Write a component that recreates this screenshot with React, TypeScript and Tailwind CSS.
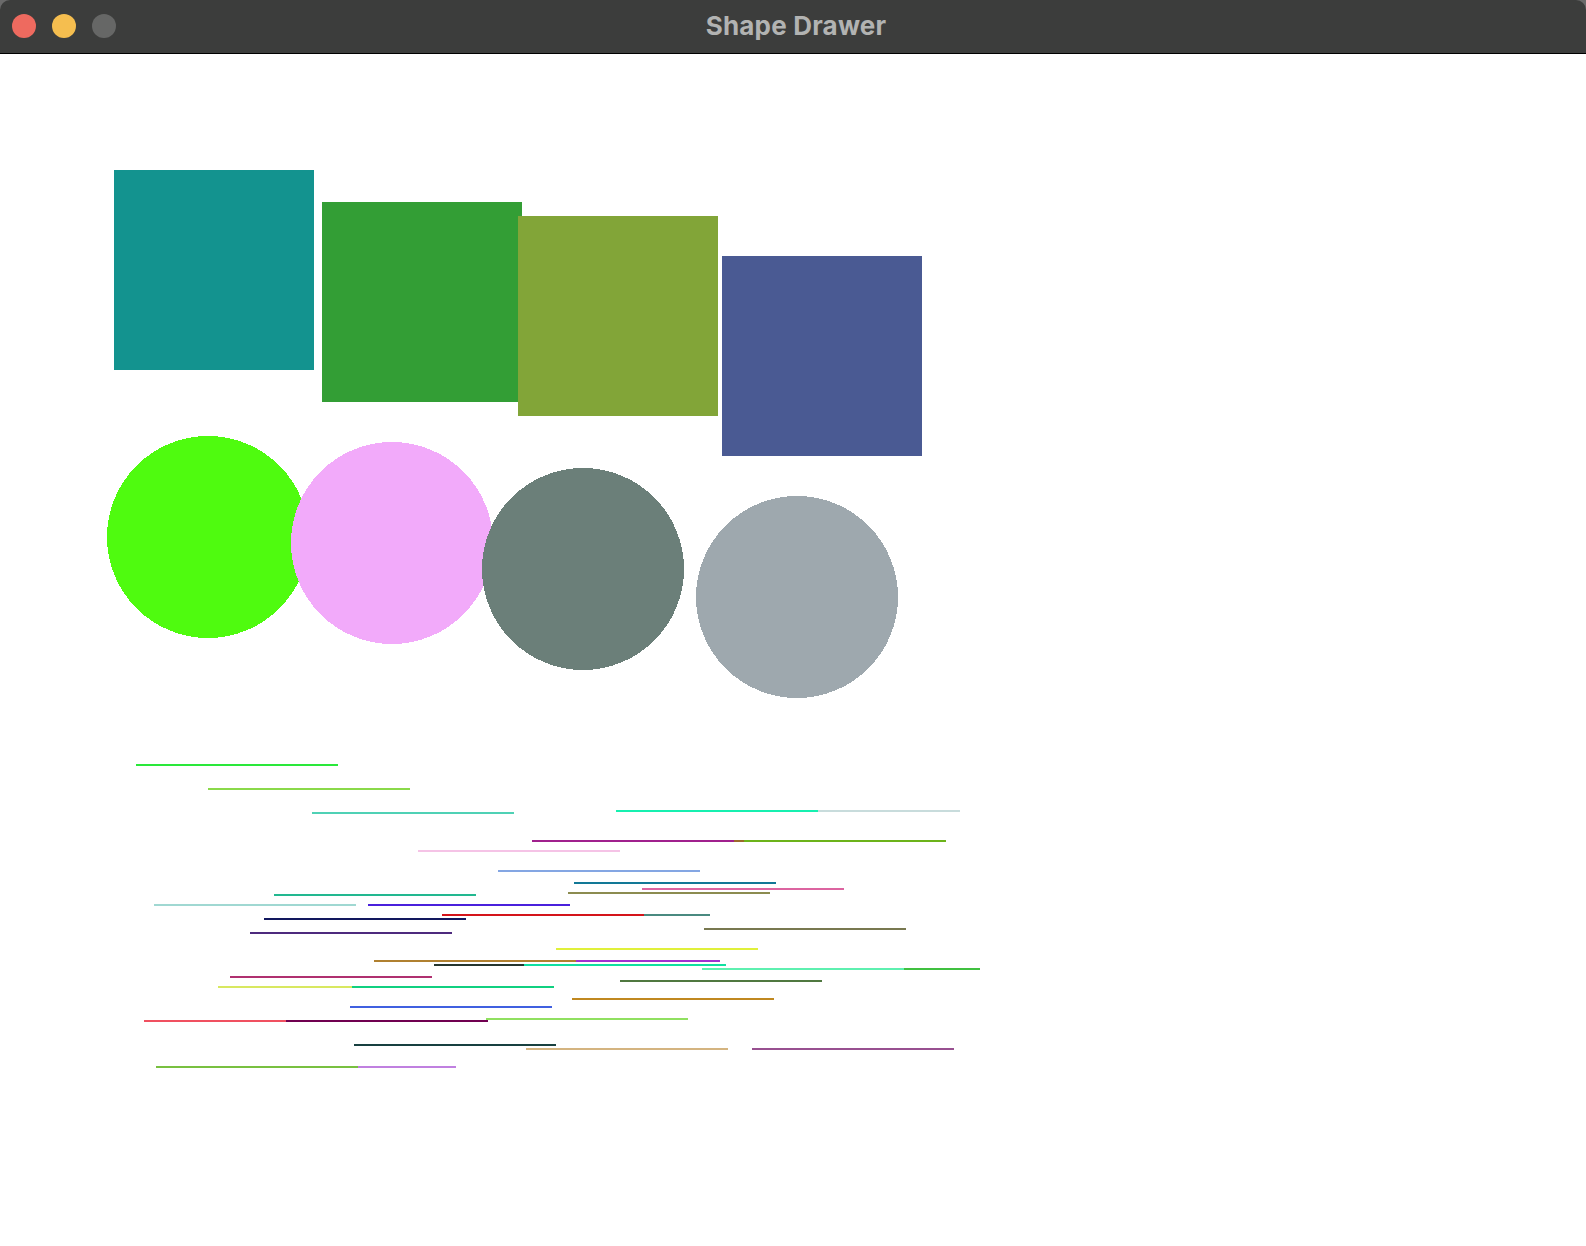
type Box = { x: number; y: number; size: number; color: string };
type Seg = { x: number; y: number; w: number; color: string };

const squares: Box[] = [
  { x: 114, y: 170, size: 200, color: "#13938f" },
  { x: 322, y: 202, size: 200, color: "#339e35" },
  { x: 518, y: 216, size: 200, color: "#82a538" },
  { x: 722, y: 256, size: 200, color: "#4a5a93" },
];

// x, y = top-left of bounding box
const circles: Box[] = [
  { x: 107, y: 436, size: 202, color: "#4ffb0f" },
  { x: 291, y: 442, size: 202, color: "#f2aafa" },
  { x: 482, y: 468, size: 202, color: "#6b7f79" },
  { x: 696, y: 496, size: 202, color: "#9ea8ae" },
];

// drawn in order, later ones on top
const lines: Seg[] = [
  { x: 136, y: 764, w: 202, color: "#2ae83a" },
  { x: 208, y: 788, w: 202, color: "#8ad94a" },
  { x: 312, y: 812, w: 202, color: "#4fd1b5" },
  { x: 758, y: 810, w: 202, color: "#c8dcdc" },
  { x: 616, y: 810, w: 202, color: "#16f0b0" },
  { x: 542, y: 840, w: 202, color: "#9b6a2a" },
  { x: 532, y: 840, w: 202, color: "#a0208d" },
  { x: 744, y: 840, w: 202, color: "#6cb31a" },
  { x: 418, y: 850, w: 202, color: "#f5c3e6" },
  { x: 498, y: 870, w: 202, color: "#84a6e3" },
  { x: 574, y: 882, w: 202, color: "#127896" },
  { x: 642, y: 888, w: 202, color: "#dc64a0" },
  { x: 568, y: 892, w: 202, color: "#8c8c50" },
  { x: 274, y: 894, w: 202, color: "#22b890" },
  { x: 154, y: 904, w: 202, color: "#a0d8d2" },
  { x: 368, y: 904, w: 202, color: "#4a20dc" },
  { x: 508, y: 914, w: 202, color: "#4a8a80" },
  { x: 442, y: 914, w: 202, color: "#d4141a" },
  { x: 264, y: 918, w: 202, color: "#12185e" },
  { x: 704, y: 928, w: 202, color: "#787850" },
  { x: 250, y: 932, w: 202, color: "#4e2a7e" },
  { x: 556, y: 948, w: 202, color: "#e0f03a" },
  { x: 518, y: 960, w: 202, color: "#a030d0" },
  { x: 374, y: 960, w: 202, color: "#b08030" },
  { x: 434, y: 964, w: 202, color: "#25352e" },
  { x: 524, y: 964, w: 202, color: "#10e0a0" },
  { x: 702, y: 968, w: 202, color: "#5ef0b0" },
  { x: 904, y: 968, w: 76, color: "#40c040" },
  { x: 230, y: 976, w: 202, color: "#b03070" },
  { x: 620, y: 980, w: 202, color: "#507840" },
  { x: 218, y: 986, w: 202, color: "#d8e860" },
  { x: 352, y: 986, w: 202, color: "#10d080" },
  { x: 572, y: 998, w: 202, color: "#c08820" },
  { x: 350, y: 1006, w: 202, color: "#4060e0" },
  { x: 486, y: 1018, w: 202, color: "#90e060" },
  { x: 144, y: 1020, w: 202, color: "#f05060" },
  { x: 286, y: 1020, w: 202, color: "#700050" },
  { x: 354, y: 1044, w: 202, color: "#184040" },
  { x: 526, y: 1048, w: 202, color: "#d4b480" },
  { x: 752, y: 1048, w: 202, color: "#985090" },
  { x: 254, y: 1066, w: 202, color: "#c080e0" },
  { x: 156, y: 1066, w: 202, color: "#78c040" },
];

const TitleBar = () => (
  <div className="relative flex h-[54px] shrink-0 items-center justify-center rounded-t-[10px] border-b border-black bg-[#3c3d3c]">
    <div className="absolute left-3 top-[14px] flex gap-4">
      <span className="h-6 w-6 rounded-full bg-[#ee6a5f]" />
      <span className="h-6 w-6 rounded-full bg-[#f5be4f]" />
      <span className="h-6 w-6 rounded-full bg-[#666766]" />
    </div>
    <h1 className="-mt-[2px] ml-[6px] font-['Inter',sans-serif] text-[26px] font-bold tracking-[0.2px] text-[#b2b3b2]">
      Shape Drawer
    </h1>
  </div>
);

const App = () => {
  return (
    <div className="flex h-[1246px] w-[1586px] flex-col overflow-hidden bg-[#6a6a6a]">
      <TitleBar />
      <div className="flex-1 bg-white">
        <svg
          width="1586"
          height="1192"
          viewBox="0 54 1586 1192"
          shapeRendering="crispEdges"
          className="block"
        >
          {squares.map((s, i) => (
            <rect key={"s" + i} x={s.x} y={s.y} width={s.size} height={s.size} fill={s.color} />
          ))}
          {circles.map((c, i) => (
            <circle
              key={"c" + i}
              cx={c.x + c.size / 2}
              cy={c.y + c.size / 2}
              r={c.size / 2}
              fill={c.color}
            />
          ))}
          {lines.map((l, i) => (
            <rect key={"l" + i} x={l.x} y={l.y} width={l.w} height={2} fill={l.color} />
          ))}
        </svg>
      </div>
    </div>
  );
};

export default App;
